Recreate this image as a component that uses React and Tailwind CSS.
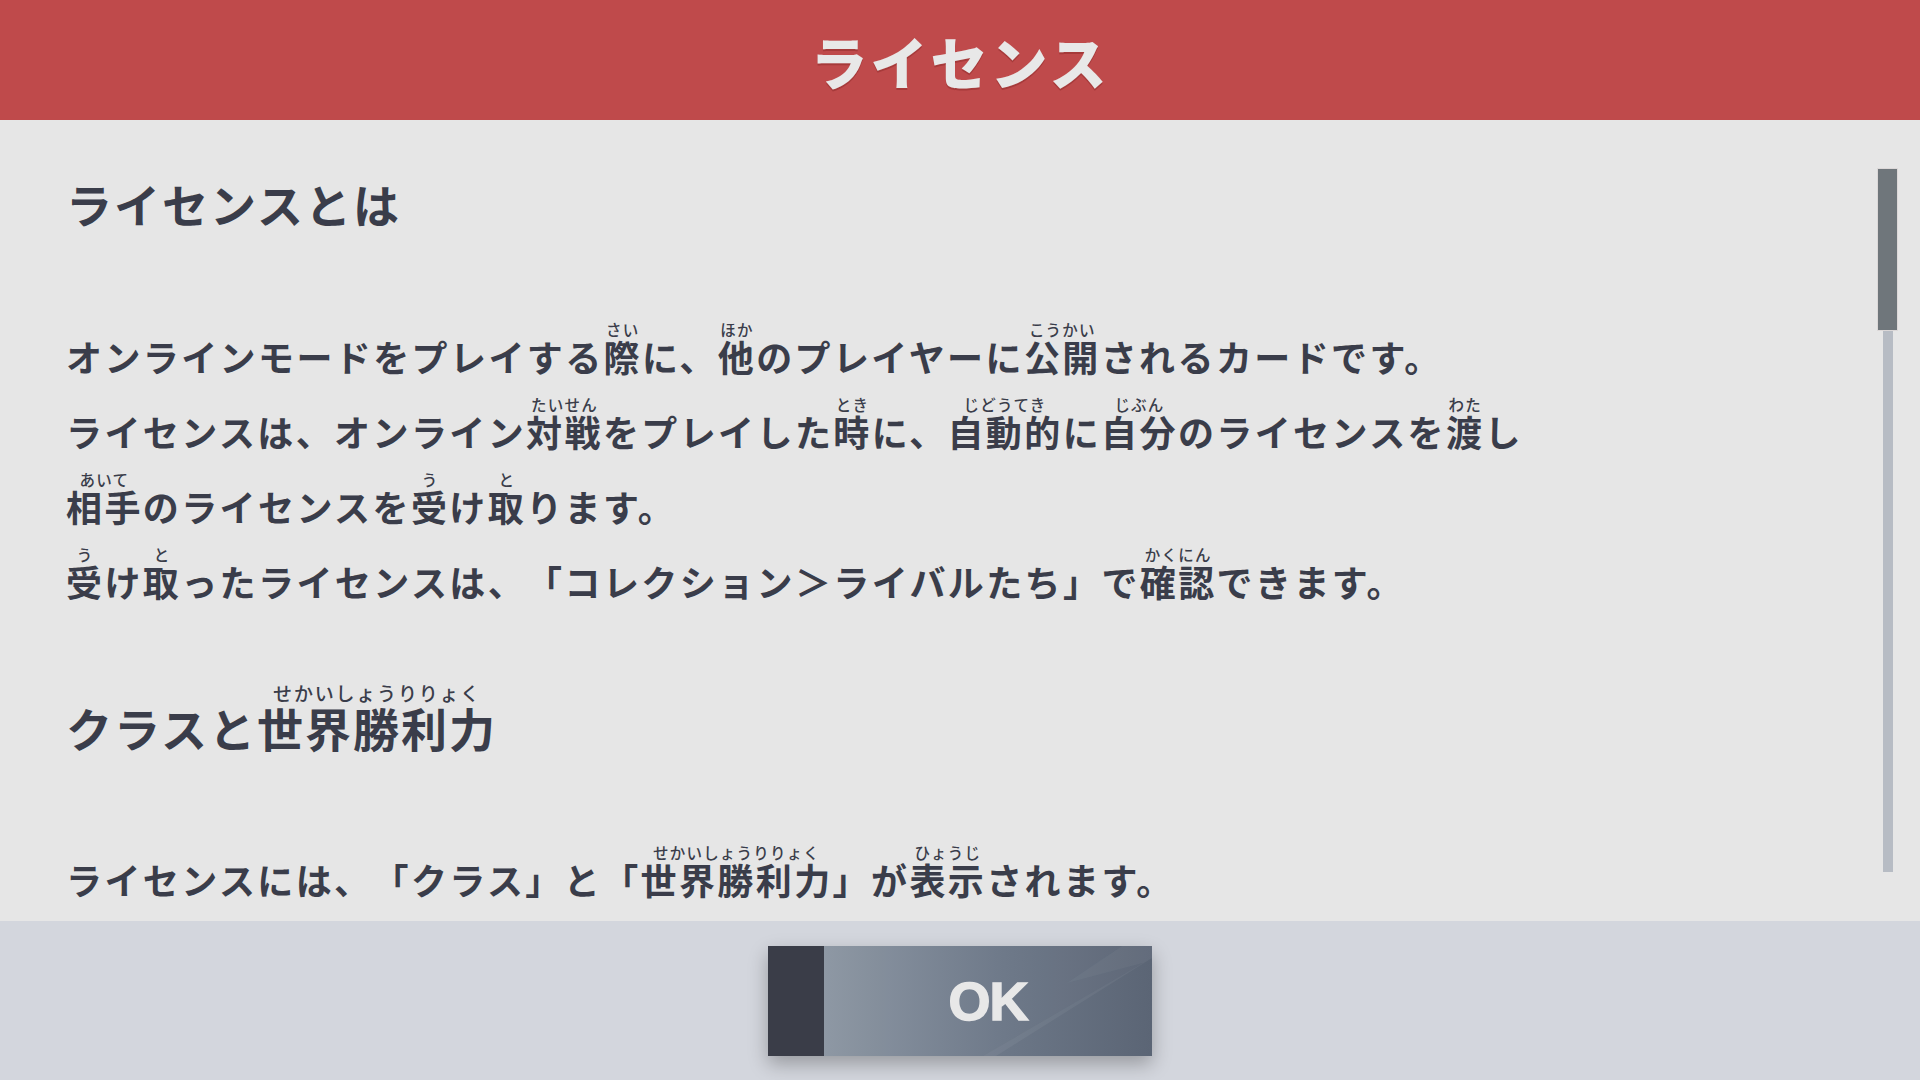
import React from "react";

const R = ({ b, r, h }) => (
  <span className="relative">
    {b}
    <span
      className={
        h
          ? "absolute left-1/2 -translate-x-1/2 top-[-11px] whitespace-nowrap text-[19px] leading-5 tracking-[1.8px] font-medium"
          : "absolute left-1/2 -translate-x-1/2 top-[-9px] whitespace-nowrap text-[15.5px] leading-4 tracking-[1.2px] font-medium"
      }
    >
      {r}
    </span>
  </span>
);

const Line = ({ children }) => (
  <div className="whitespace-nowrap text-[36px] leading-[75px] tracking-[2.4px] font-bold [text-spacing-trim:space-all]">{children}</div>
);

const Heading = ({ children, className }) => (
  <div className={"whitespace-nowrap text-[46px] leading-[76px] tracking-[2px] font-bold [text-spacing-trim:space-all] " + className}>{children}</div>
);

export default function App() {
  return (
    <div
      className="w-[1920px] h-[1080px] flex flex-col overflow-hidden bg-[#e6e6e6] text-[#3a3d4a]"
      style={{ fontFamily: '"Noto Sans CJK JP", "Noto Sans", sans-serif' }}
    >
      <header className="h-[120px] shrink-0 bg-[#bf4a4b] flex items-center justify-center">
        <h1 className="text-[57px] leading-none font-black tracking-[3px] text-[#e8e8e8] [text-shadow:0_2px_0_rgba(120,30,30,0.35)]">
          ライセンス
        </h1>
      </header>

      <main className="flex-1 flex min-h-0 overflow-hidden">
        <div className="flex-1 pl-[66px] pt-[45px]">
          <Heading>ライセンスとは</Heading>
          <div className="mt-[78px]">
            <Line>
              オンラインモードをプレイする<R b="際" r="さい" />に、<R b="他" r="ほか" />のプレイヤーに<R b="公開" r="こうかい" />されるカードです。
            </Line>
            <Line>
              ライセンスは、オンライン<R b="対戦" r="たいせん" />をプレイした<R b="時" r="とき" />に、<R b="自動的" r="じどうてき" />に<R b="自分" r="じぶん" />のライセンスを<R b="渡" r="わた" />し
            </Line>
            <Line>
              <R b="相手" r="あいて" />のライセンスを<R b="受" r="う" />け<R b="取" r="と" />ります。
            </Line>
            <Line>
              <R b="受" r="う" />け<R b="取" r="と" />ったライセンスは、「コレクション＞ライバルたち」で<R b="確認" r="かくにん" />できます。
            </Line>
          </div>
          <Heading className="mt-[70px]">
            クラスと<R b="世界勝利力" r="せかいしょうりりょく" h />
          </Heading>
          <div className="mt-[77px]">
            <Line>
              ライセンスには、「クラス」と「<R b="世界勝利力" r="せかいしょうりりょく" />」が<R b="表示" r="ひょうじ" />されます。
            </Line>
          </div>
        </div>

        <div className="w-[21px] mr-[22px] pt-[48px] pb-[49px] flex flex-col items-center">
          <div className="w-[21px] h-[163px] bg-[#6f767b] border border-[#dcd8d8] shrink-0" />
          <div className="w-[10px] flex-1 bg-[#b7bcc4]" />
        </div>
      </main>

      <footer className="h-[159px] shrink-0 bg-[#d3d6dd] flex items-center justify-center">
        <button className="relative flex w-[384px] h-[110px] shadow-[0_8px_18px_rgba(0,0,0,0.28)]">
          <div className="w-[56px] h-full bg-[#3a3d48]" />
          <div className="relative flex-1 h-full bg-linear-to-r from-[#8c96a3] via-[#6c7787] via-55% to-[#5b6575] flex items-center justify-center overflow-hidden">
            <svg className="absolute inset-0" width="328" height="110" viewBox="0 0 328 110">
              <polygon points="298,0 243,37 319,17 159,110 172,110 328,12 328,0" fill="#ffffff" fillOpacity="0.05" />
              <polygon points="0,0 298,0 243,37 319,17 159,110 0,110" fill="#ffffff" fillOpacity="0.02" />
            </svg>
            <span
              className="relative text-[54px] leading-none font-bold tracking-[-1px] text-[#e8e8e8] [-webkit-text-stroke:1.5px_#e8e8e8]"
              style={{ fontFamily: '"Liberation Sans", Arial, sans-serif' }}
            >
              OK
            </span>
          </div>
        </button>
      </footer>
    </div>
  );
}
